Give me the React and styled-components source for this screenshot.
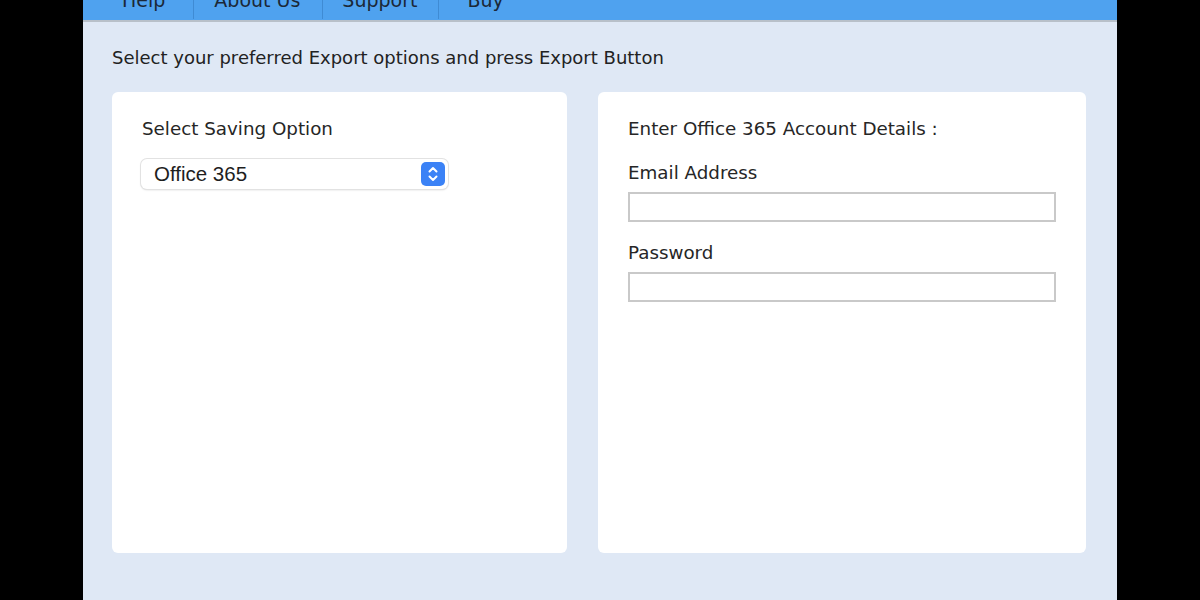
import styled, { createGlobalStyle } from 'styled-components';

const GlobalStyle = createGlobalStyle`
  body {
    margin: 0;
    background: #000;
    font-family: "DejaVu Sans", sans-serif;
  }
`;

const Window = styled.div`
  width: 1034px;
  height: 600px;
  margin: 0 auto;
  background: #dfe8f5;
  overflow: hidden;
`;

const MenuBar = styled.nav`
  display: flex;
  height: 20px;
  padding-left: 39px;
  background: #4fa2ef;
  border-bottom: 2px solid #b8c0c9;
  overflow: hidden;
`;

const MenuItem = styled.span`
  margin-top: -15px;
  padding: 0 ${(p) => p.$right}px 0 ${(p) => p.$left}px;
  height: 34px;
  line-height: 30px;
  font-size: 19px;
  color: #1b2838;
  border-right: ${(p) => (p.$last ? 'none' : '1px solid #3f8bd4')};
`;

const Content = styled.main`
  padding: 0 31px 0 29px;
`;

const Intro = styled.p`
  margin: 0;
  padding: 25px 0 0;
  height: 48px;
  box-sizing: border-box;
  font-size: 18px;
  color: #222;
`;

const Cards = styled.div`
  display: grid;
  grid-template-columns: 455px 488px;
  gap: 31px;
  margin-top: 22px;
`;

const Card = styled.section`
  height: 461px;
  box-sizing: border-box;
  padding: 26px 30px;
  background: #fff;
  border-radius: 6px;
  display: flex;
  flex-direction: column;
`;

const Label = styled.div`
  font-size: 18.3px;
  line-height: 22px;
  color: #262626;
  margin-bottom: ${(p) => p.$gap}px;
`;

const Select = styled.div`
  display: flex;
  align-items: center;
  justify-content: space-between;
  width: 307px;
  height: 30px;
  box-sizing: border-box;
  margin-left: -1px;
  padding: 0 3px 0 13px;
  border-radius: 6px;
  background: #fff;
  box-shadow: 0 0 0 1px #e2e2e2, 0 1px 2px rgba(0, 0, 0, 0.18);
  font-family: "Liberation Sans", Arial, sans-serif;
  font-size: 20.5px;
  color: #1e1e1e;
`;

const Stepper = styled.span`
  display: flex;
  align-items: center;
  justify-content: center;
  width: 24px;
  height: 24px;
  border-radius: 5px;
  background: #3b82f6;
`;

const Input = styled.input`
  width: 428px;
  height: 30px;
  box-sizing: border-box;
  margin: 0 0 ${(p) => p.$gap}px;
  border: 2px solid #c9c9c9;
  background: #fff;
  outline: none;
`;

export default function App() {
  return (
    <>
      <GlobalStyle />
      <Window>
        <MenuBar>
          <MenuItem $left={0} $right={28}>Help</MenuItem>
          <MenuItem $left={20} $right={22}>About Us</MenuItem>
          <MenuItem $left={19} $right={21}>Support</MenuItem>
          <MenuItem $left={28} $right={20} $last>Buy</MenuItem>
        </MenuBar>
        <Content>
          <Intro>Select your preferred Export options and press Export Button</Intro>
          <Cards>
            <Card>
              <Label $gap={19}>Select Saving Option</Label>
              <Select>
                Office 365
                <Stepper>
                  <svg width="12" height="18" viewBox="0 0 12 18" fill="none" stroke="#fff" strokeWidth="2" strokeLinecap="round" strokeLinejoin="round">
                    <path d="M2.5 6.5 6 3l3.5 3.5" />
                    <path d="M2.5 11.5 6 15l3.5-3.5" />
                  </svg>
                </Stepper>
              </Select>
            </Card>
            <Card>
              <Label $gap={22}>Enter Office 365 Account Details :</Label>
              <Label $gap={8}>Email Address</Label>
              <Input type="text" $gap={20} />
              <Label $gap={8}>Password</Label>
              <Input type="password" $gap={0} />
            </Card>
          </Cards>
        </Content>
      </Window>
    </>
  );
}
